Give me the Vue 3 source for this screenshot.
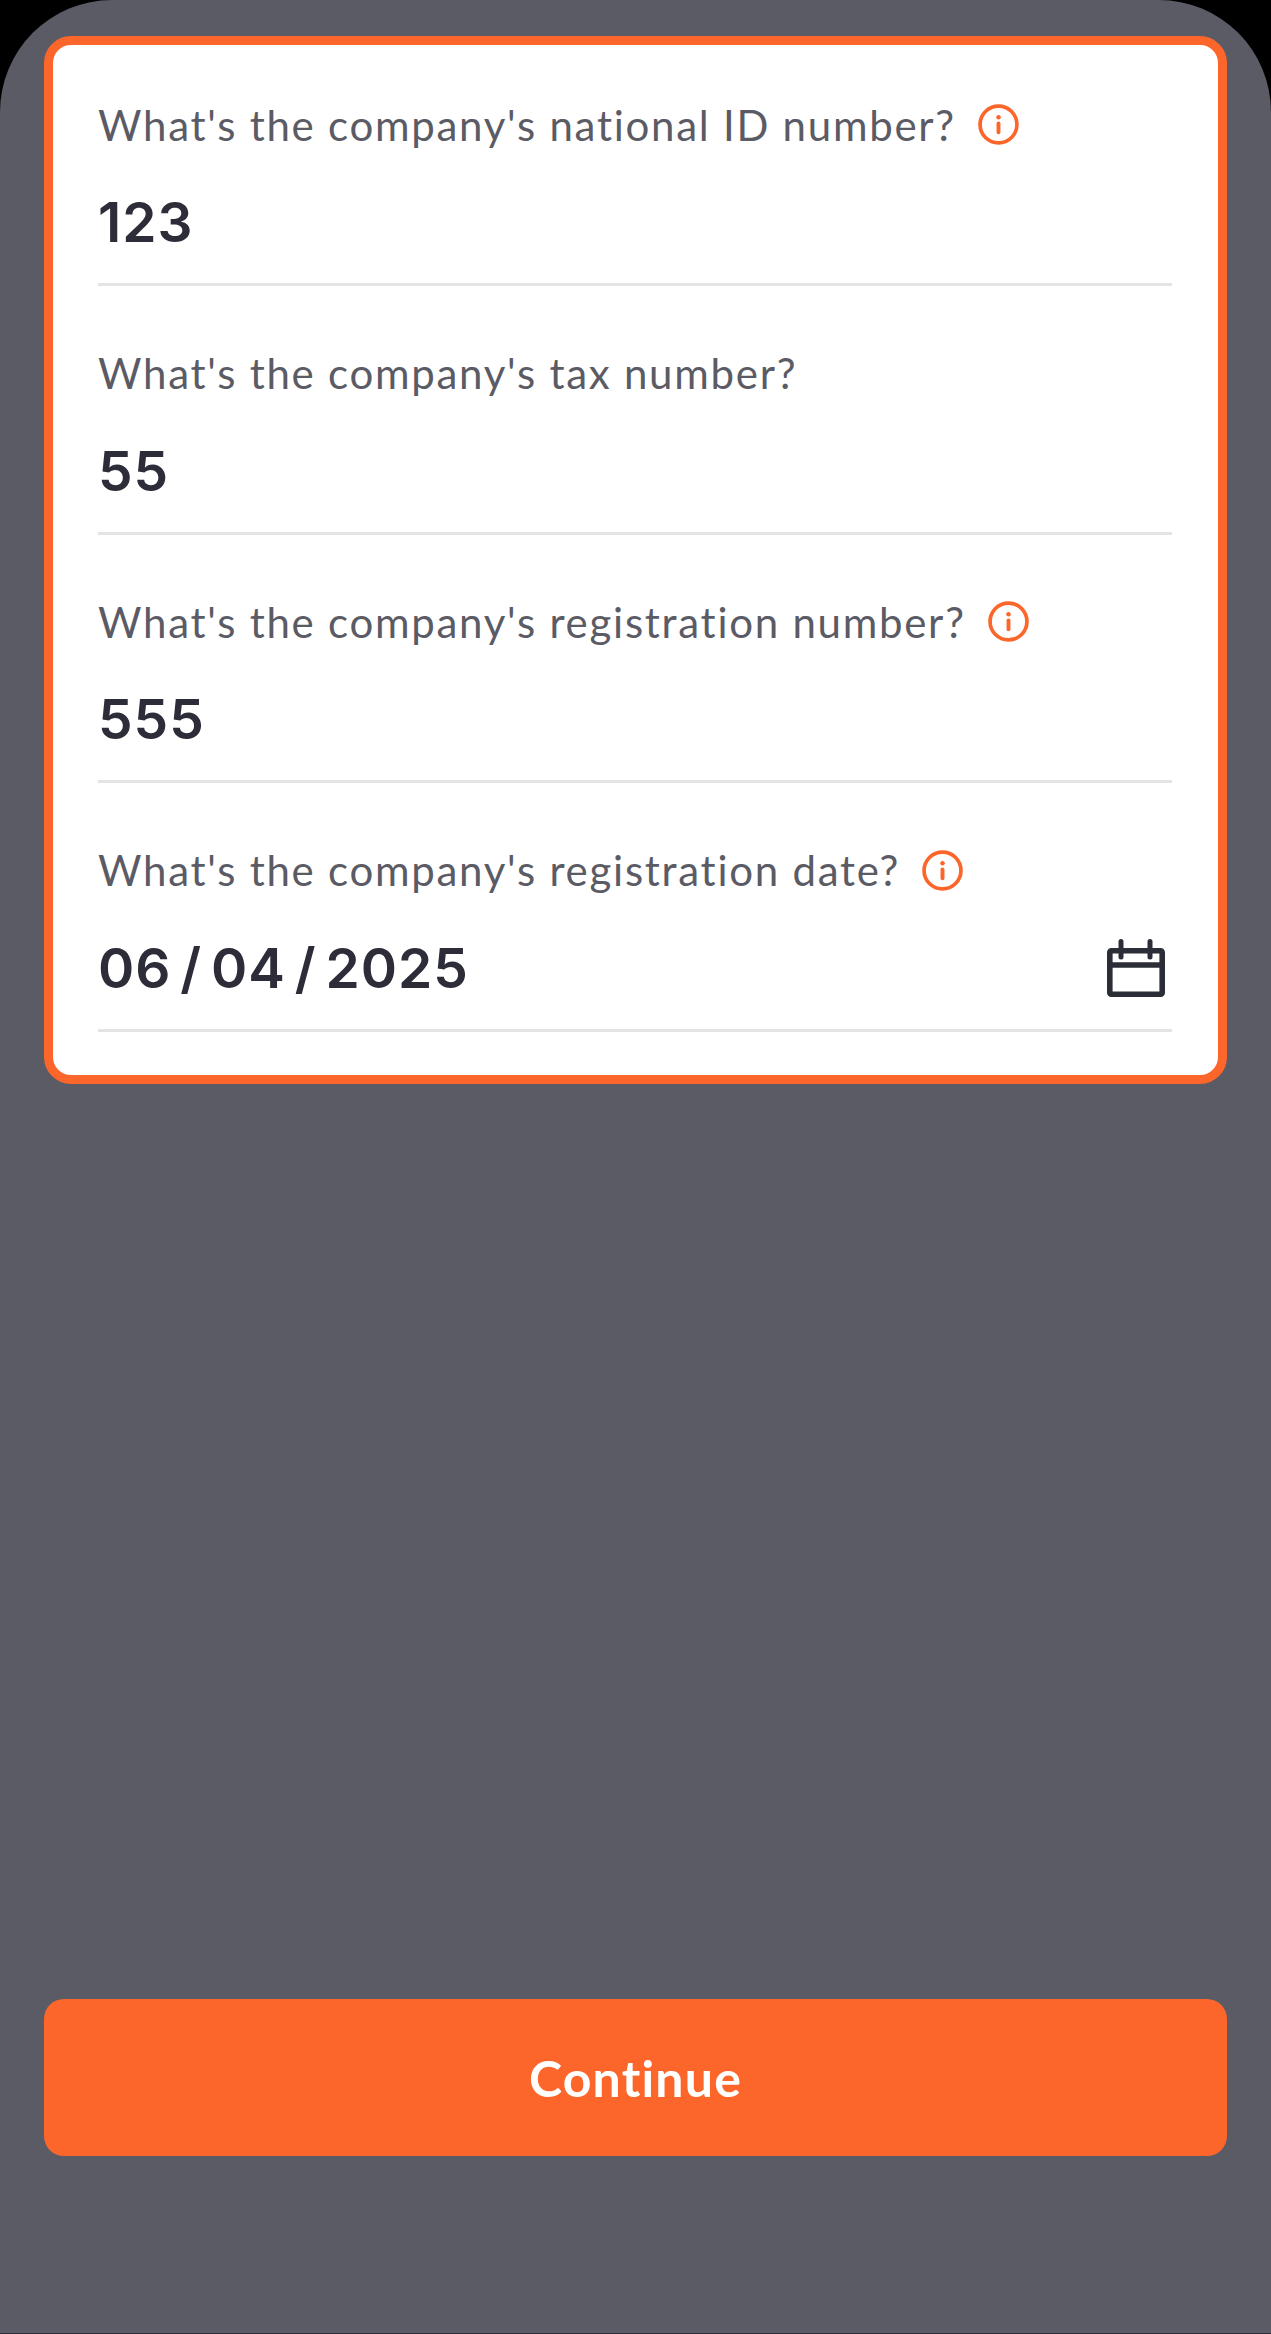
<template>
  <div class="screen">
    <div class="sheet">
      <form class="card" @submit.prevent>
        <div v-for="field in fields" :key="field.label" class="field">
          <div class="field__label">
            <span>{{ field.label }}</span>
            <svg v-if="field.info" class="info" viewBox="0 0 40 40" fill="none" aria-hidden="true">
              <circle cx="20" cy="20" r="18" stroke="currentColor" stroke-width="3.6" />
              <circle cx="20" cy="13" r="2.2" fill="currentColor" />
              <path d="M20 19v8.5" stroke="currentColor" stroke-width="3.8" stroke-linecap="round" />
            </svg>
          </div>
          <div class="field__value">
            <span>{{ field.value }}</span>
            <svg v-if="field.date" class="calendar" viewBox="0 0 58 58" fill="none" aria-hidden="true">
              <rect x="2.8" y="11.8" width="52.4" height="43.4" rx="1.5" stroke="currentColor" stroke-width="5.6" />
              <path d="M2.8 26h52.4" stroke="currentColor" stroke-width="5.6" />
              <path d="M14 2.5v15.5M43 2.5v15.5" stroke="currentColor" stroke-width="5" stroke-linecap="round" />
            </svg>
          </div>
        </div>
      </form>
      <button class="continue" type="button">Continue</button>
    </div>
  </div>
</template>

<script setup>
const fields = [
  { label: "What's the company's national ID number?", value: '123', info: true },
  { label: "What's the company's tax number?", value: '55' },
  { label: "What's the company's registration number?", value: '555', info: true },
  { label: "What's the company's registration date?", value: '06 / 04 / 2025', info: true, date: true }
]
</script>

<style>
html, body { margin: 0; background: #000; }
</style>

<style scoped>
.screen {
  width: 1271px;
  height: 2334px;
  background: #000;
  overflow: hidden;
}

.sheet {
  box-sizing: border-box;
  height: 100%;
  padding: 36px 44px 177px;
  display: flex;
  flex-direction: column;
  background: #5b5b65;
  border-radius: 112px 112px 0 0;
  border-bottom: 1px solid #2d2d3a;
}

.card {
  box-sizing: border-box;
  height: 1048px;
  padding: 52px 46px 0 45px;
  display: flex;
  flex-direction: column;
  gap: 59.67px;
  background: #fff;
  border: 9px solid #fc662a;
  border-radius: 27px;
}

.field {
  border-bottom: 3px solid #e4e4e6;
  padding-bottom: 33px;
}

.field__label {
  display: flex;
  align-items: center;
  gap: 22px;
  height: 55px;
  font-family: "Lato", sans-serif;
  font-size: 42px;
  letter-spacing: 1.73px;
  color: #5b5b65;
}

.info {
  width: 41px;
  height: 41px;
  color: #fc662a;
  flex: none;
}

.field__value {
  display: flex;
  align-items: center;
  justify-content: space-between;
  height: 56px;
  margin-top: 42px;
  font-family: "Inter", sans-serif;
  font-size: 55px;
  font-weight: 600;
  letter-spacing: 1px;
  word-spacing: -6px;
  color: #2d2d3a;
}

.calendar {
  width: 58px;
  height: 58px;
  color: #2b2e36;
  margin-right: 7px;
  flex: none;
}

.continue {
  margin-top: auto;
  height: 157px;
  border: none;
  border-radius: 20px;
  background: #fc662a;
  color: #fff;
  font-family: "Lato", sans-serif;
  font-size: 50px;
  font-weight: 700;
  letter-spacing: 1.2px;
}
</style>
